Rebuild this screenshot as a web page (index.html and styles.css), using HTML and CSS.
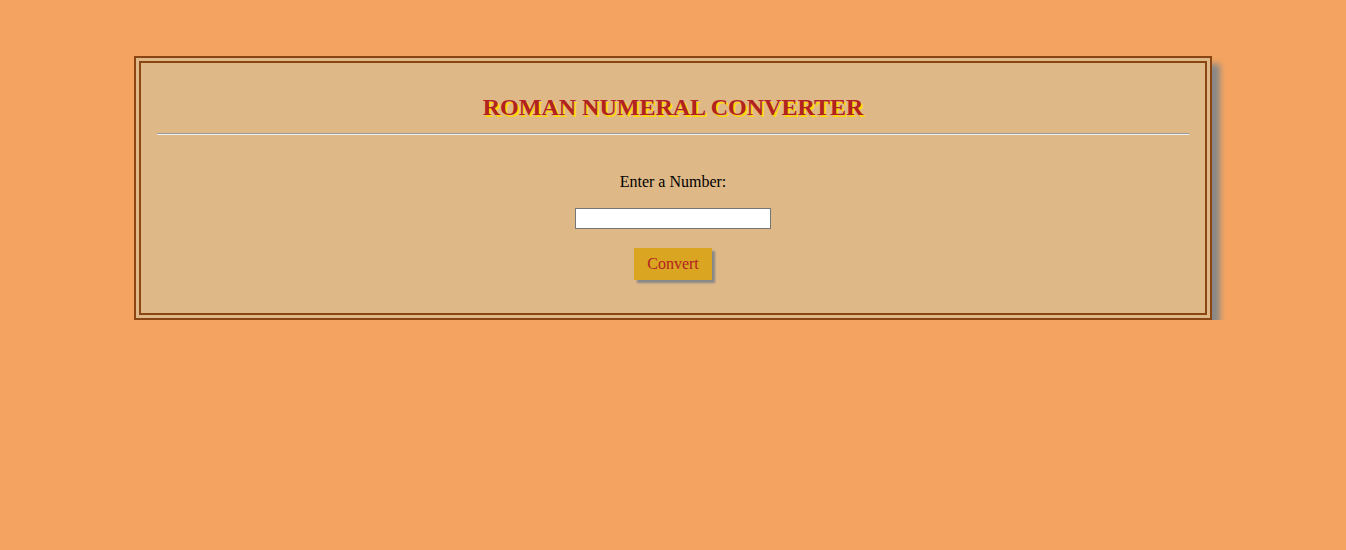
FILE: index.html
```html
<!DOCTYPE html>
<html>
<head>
<meta charset="utf-8">
<title>Roman Numeral Converter</title>
<link rel="stylesheet" href="styles.css">
</head>
<body>
<div class="container">
  <h1 class="title">ROMAN NUMERAL CONVERTER</h1>
  <hr class="rule">
  <div class="form">
    <label class="label" for="num">Enter a Number:</label>
    <input class="field" id="num" type="text">
    <button class="btn" type="button">Convert</button>
  </div>
</div>
</body>
</html>
```

FILE: styles.css
```css
html, body {
  background: #F4A460;
}
body {
  margin: 8px;
  font-family: "Liberation Serif", "Times New Roman", serif;
  font-size: 16px;
  color: #000;
}
.container {
  width: 80%;
  margin: 48px auto 0;
  background: #DEB887;
  border: 7px double #8B4513;
  box-shadow: 8px 8px 6px #888888;
  padding: 8px 0 33px;
}
.title {
  margin: 22px 0 0;
  font-size: 24px;
  font-weight: bold;
  text-align: center;
  color: #B22222;
  text-shadow: 2px 2px #FFD700;
  line-height: 28px;
}
.rule {
  width: 97%;
  margin: 12px auto 0;
  border: 0;
  border-top: 1px solid #9a9a9a;
  border-bottom: 1px solid #eee;
  height: 0;
}
.form {
  display: flex;
  flex-direction: column;
  align-items: center;
  padding-top: 38px;
}
.label {
  line-height: 18px;
}
.field {
  margin-top: 17px;
  width: 196px;
  height: 21px;
  box-sizing: border-box;
  border: 1px solid #767676;
  background: #fff;
  padding: 1px 2px;
  font-family: inherit;
}
.btn {
  margin-top: 19px;
  width: 78px;
  height: 32px;
  background: #DAA520;
  color: #B22222;
  border: 0;
  font-family: "Liberation Serif", "Times New Roman", serif;
  font-size: 16px;
  box-shadow: 3px 3px 2px #888888;
  padding: 0;
}
```
